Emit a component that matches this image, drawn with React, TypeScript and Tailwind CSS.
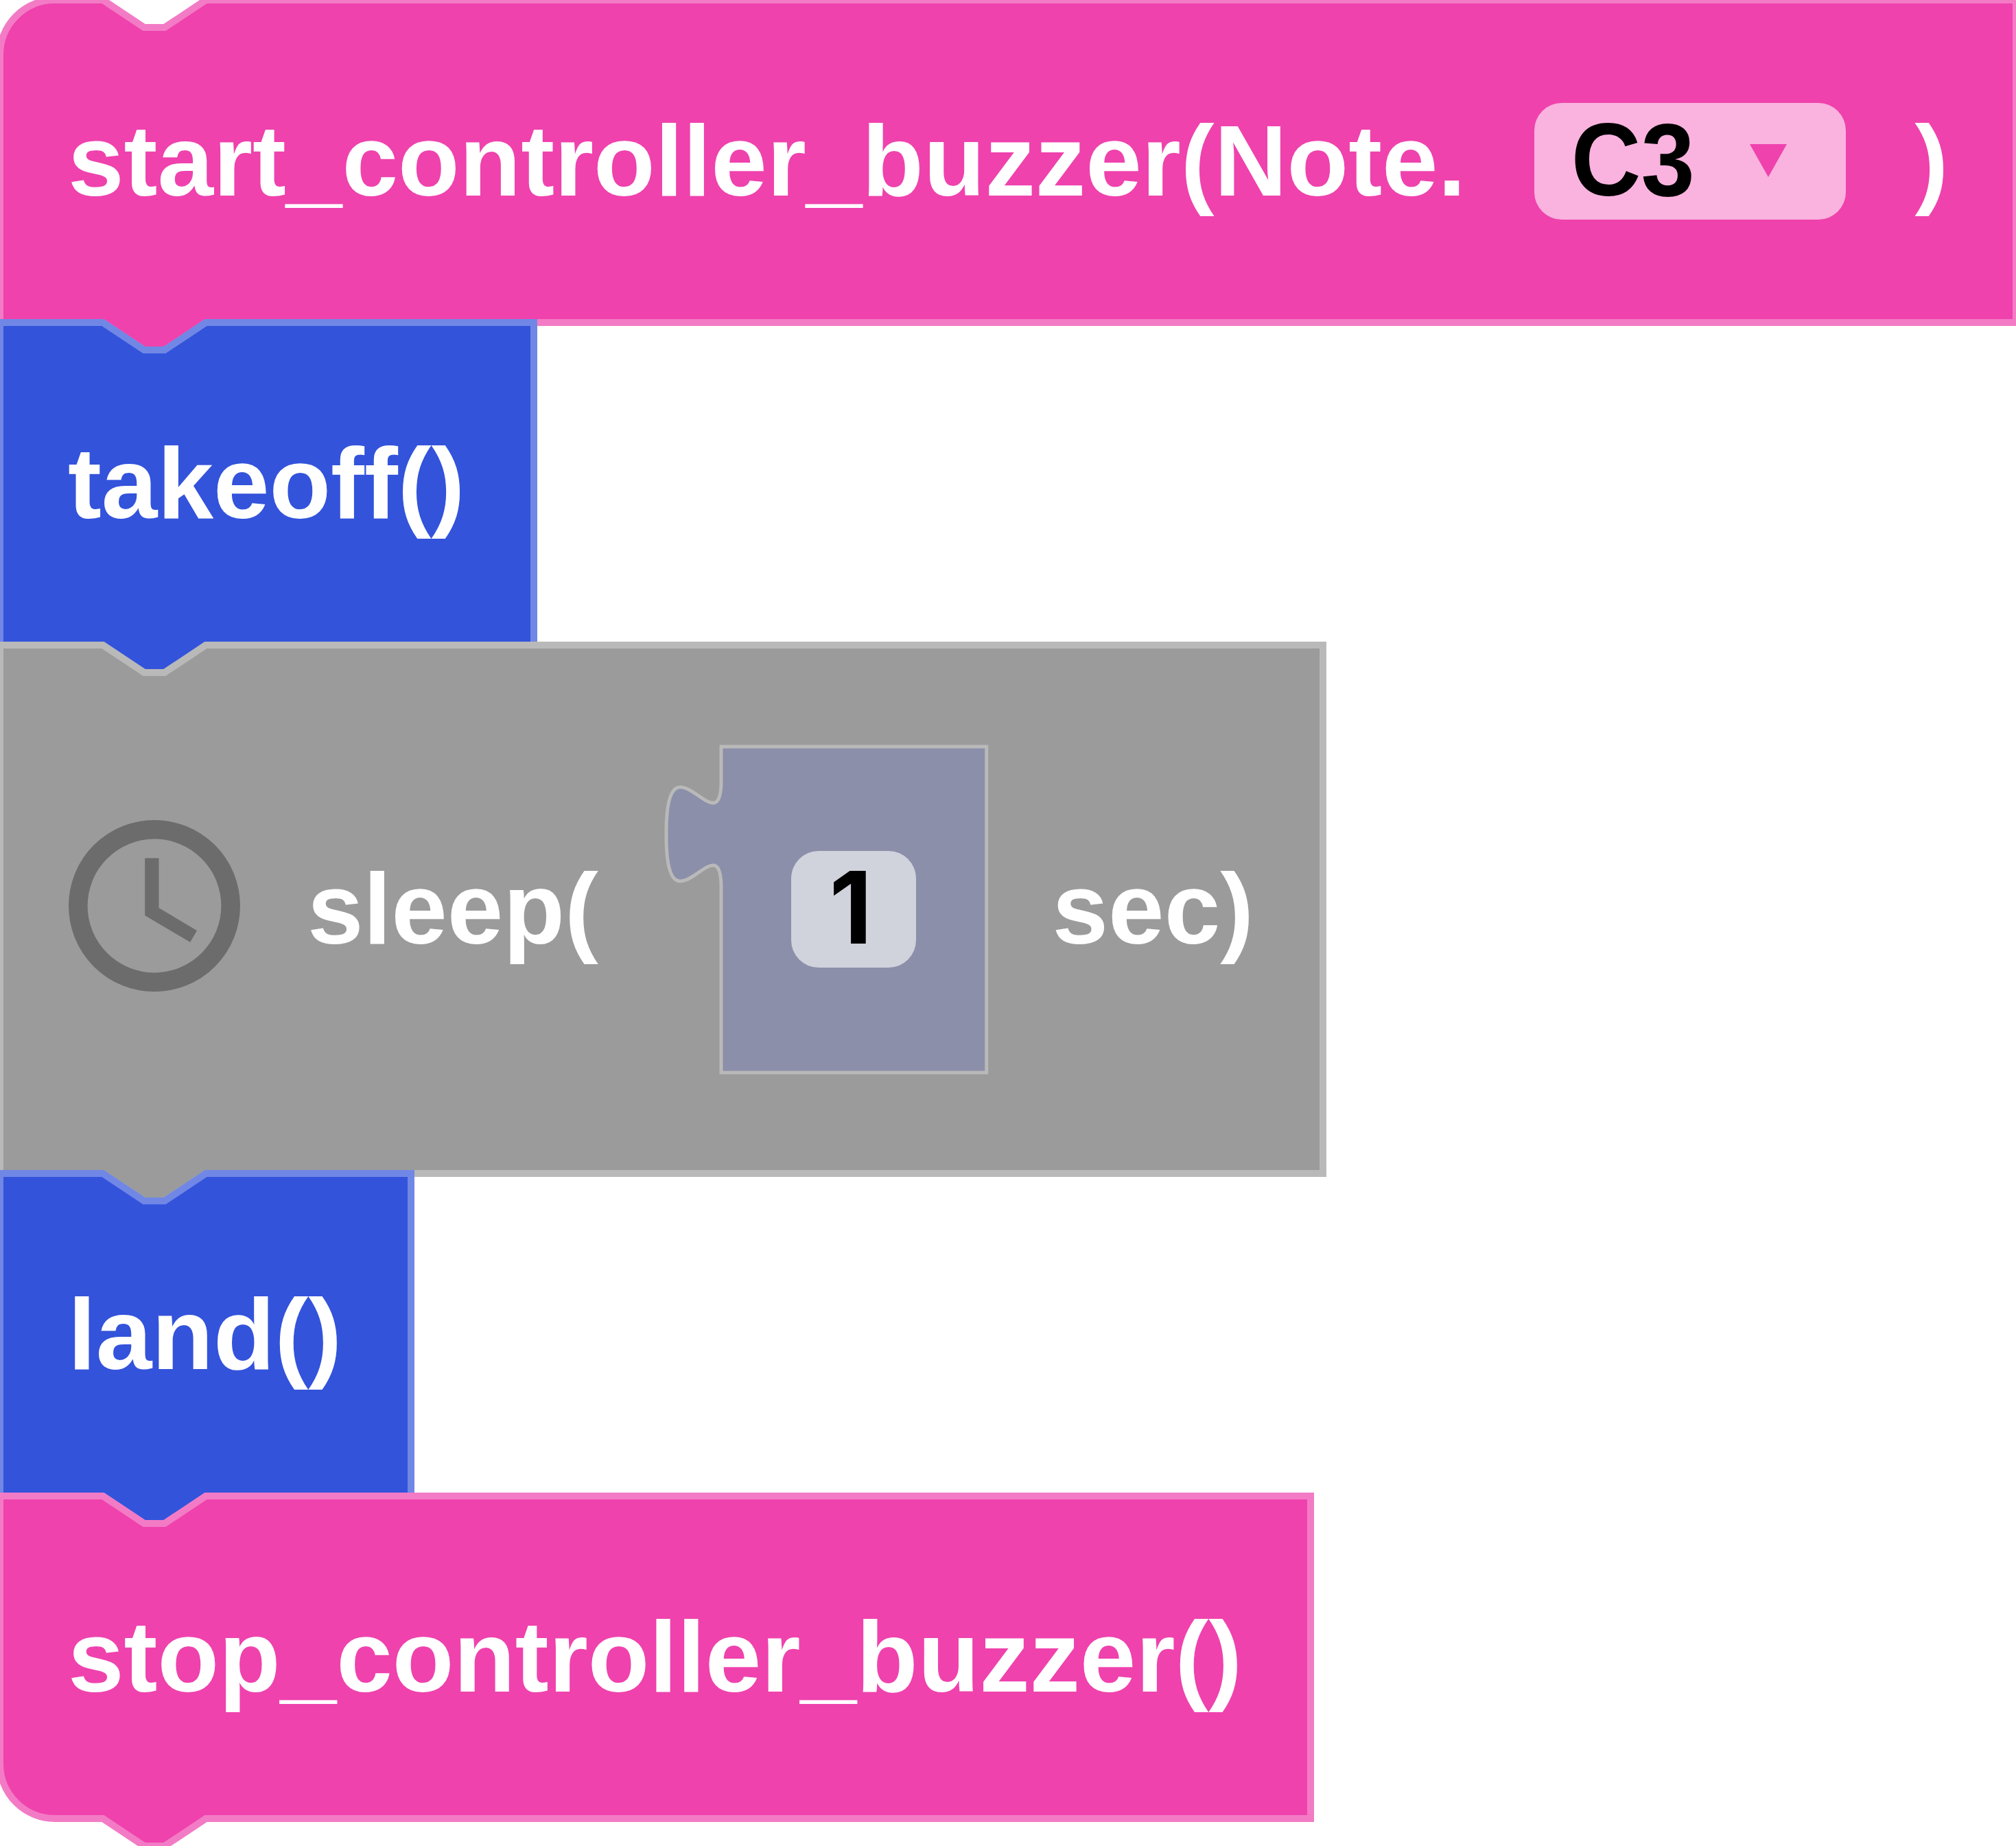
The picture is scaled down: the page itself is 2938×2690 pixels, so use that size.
import type { ReactNode } from "react";

type Theme = { fill: string; stroke: string };

const PINK: Theme = { fill: "fill-[#ef42ad]", stroke: "stroke-[#f37bc5]" };
const BLUE: Theme = { fill: "fill-[#3353db]", stroke: "stroke-[#7087e6]" };
const GRAY: Theme = { fill: "fill-[#9b9b9b]", stroke: "stroke-[#b9b9b9]" };

type BlockProps = {
  theme: Theme;
  width: number;
  height: number;
  roundTop?: boolean;
  roundBottom?: boolean;
  children: ReactNode;
};

/* Statement block: notch cut into the top edge, matching tab on the bottom edge. */
function outline(width: number, height: number, roundTop?: boolean, roundBottom?: boolean) {
  const start = roundTop ? "M 0,80 A 80,80 0 0 1 80,0" : "M 0,0";
  const end = roundBottom ? `H 80 A 80,80 0 0 1 0,${height - 80} Z` : "H 0 Z";
  return `${start} H 150 l 60,40 h 30 l 60,-40 H ${width} V ${height} H 300 l -60,40 h -30 l -60,-40 ${end}`;
}

function Block({ theme, width, height, roundTop, roundBottom, children }: BlockProps) {
  return (
    <div className="relative shrink-0" style={{ width, height }}>
      <svg className="absolute inset-0 overflow-visible" width={width} height={height}>
        <path
          d={outline(width, height, roundTop, roundBottom)}
          className={`${theme.fill} ${theme.stroke}`}
          strokeWidth={10}
        />
      </svg>
      <div className="relative flex items-start pl-[99px]">{children}</div>
    </div>
  );
}

function Label({ className, children }: { className: string; children: ReactNode }) {
  return <span className={`shrink-0 whitespace-pre text-white ${className}`}>{children}</span>;
}

function ClockIcon() {
  return (
    <svg className="ml-px mt-[255px] shrink-0" width={250} height={250} viewBox="0 0 250 250">
      <circle cx={125} cy={125} r={111.2} className="fill-none stroke-[#6c6c6c]" strokeWidth={27.6} />
      <path d="M111.2 55.5H131.5V128L187 161L177.2 178L111.2 139Z" className="fill-[#6c6c6c]" />
    </svg>
  );
}

function NumberBlock({ value }: { value: string }) {
  return (
    <div className="relative ml-[179px] mt-[147.5px] h-[475px] w-[386.7px] shrink-0">
      <svg className="absolute inset-0 overflow-visible" width={387} height={475}>
        <path
          d="M 0,0 V 50 c 0,100 -80,-80 -80,75 v 5 c 0,155 80,-25 80,75 V 475 H 386.7 V 0 Z"
          className="fill-[#8b8fa9] stroke-[#b9b9b9]"
          strokeWidth={5}
        />
      </svg>
      <div className="relative flex justify-center pt-[152.5px]">
        <div className="flex h-[170px] w-[181.6px] rounded-[40px] bg-white/60 pl-[55px] pt-[9.5px] font-['Inter',sans-serif] text-[145.6px] leading-none text-black">
          {value}
        </div>
      </div>
    </div>
  );
}

function NoteDropdown({ value }: { value: string }) {
  return (
    <div className="ml-[100px] mt-[150px] flex h-[170px] w-[453.3px] shrink-0 items-start rounded-[40px] bg-white/60 pl-[50px] text-black">
      <span className="mt-[11px] origin-[50%_85%] scale-x-96 scale-y-103">{value}</span>
      <svg className="ml-[76.5px] mt-[60px]" width={54} height={48} viewBox="0 0 54 48">
        <path d="M0 0H54L27 48Z" className="fill-[#ef42ad]" />
      </svg>
    </div>
  );
}

export default function App() {
  return (
    <main className="flex h-[2690px] w-[2938px] flex-col items-start overflow-hidden bg-white font-['Liberation_Sans',Arial,sans-serif] text-[146.67px] leading-none font-bold">
      <Block theme={PINK} width={2938} height={470} roundTop>
        <Label className="mt-[161px]">start_controller_buzzer(Note.</Label>
        <NoteDropdown value="C3" />
        <Label className="ml-[101px] mt-[161px]">)</Label>
      </Block>
      <Block theme={BLUE} width={778} height={470}>
        <Label className="mt-[161px]">takeoff()</Label>
      </Block>
      <Block theme={GRAY} width={1928} height={770}>
        <ClockIcon />
        <Label className="ml-[98px] mt-[311px]">sleep(</Label>
        <NumberBlock value="1" />
        <Label className="ml-[96px] mt-[311px]">sec)</Label>
      </Block>
      <Block theme={BLUE} width={599} height={470}>
        <Label className="mt-[161px]">land()</Label>
      </Block>
      <Block theme={PINK} width={1910} height={470} roundBottom>
        <Label className="mt-[161px]">stop_controller_buzzer()</Label>
      </Block>
    </main>
  );
}
